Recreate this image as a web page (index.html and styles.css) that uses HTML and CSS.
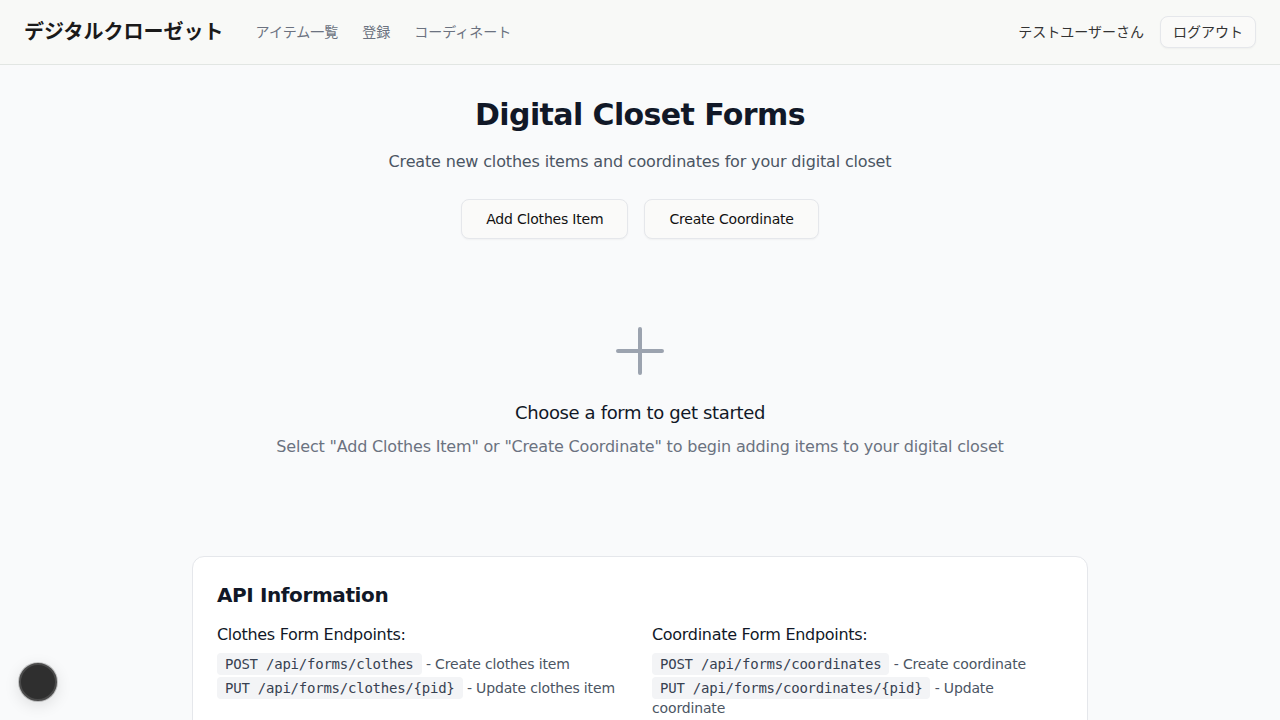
FILE: index.html
```html
<!DOCTYPE html>
<html lang="ja">
<head>
<meta charset="utf-8">
<title>Digital Closet Forms</title>
<link rel="stylesheet" href="styles.css">
</head>
<body>
<header class="topbar">
  <div class="topbar-left">
    <a class="logo" href="#">デジタルクローゼット</a>
    <nav class="nav">
      <a href="#">アイテム一覧</a>
      <a href="#">登録</a>
      <a href="#">コーディネート</a>
    </nav>
  </div>
  <div class="topbar-right">
    <span class="user">テストユーザーさん</span>
    <button class="btn-small">ログアウト</button>
  </div>
</header>

<main class="main">
  <h1 class="title">Digital Closet Forms</h1>
  <p class="subtitle">Create new clothes items and coordinates for your digital closet</p>
  <div class="actions">
    <button class="btn">Add Clothes Item</button>
    <button class="btn">Create Coordinate</button>
  </div>

  <section class="empty">
    <svg class="plus" width="48" height="48" viewBox="0 0 48 48" fill="none" stroke="#9ca3af" stroke-width="4" stroke-linecap="round">
      <path d="M24 2v44M2 24h44"/>
    </svg>
    <h3 class="empty-title">Choose a form to get started</h3>
    <p class="empty-text">Select "Add Clothes Item" or "Create Coordinate" to begin adding items to your digital closet</p>
  </section>

  <section class="card">
    <h2 class="card-title">API Information</h2>
    <div class="grid">
      <div>
        <h4 class="col-title">Clothes Form Endpoints:</h4>
        <div class="ep"><code>POST /api/forms/clothes</code> - Create clothes item</div>
        <div class="ep"><code>PUT /api/forms/clothes/{pid}</code> - Update clothes item</div>
      </div>
      <div>
        <h4 class="col-title">Coordinate Form Endpoints:</h4>
        <div class="ep"><code>POST /api/forms/coordinates</code> - Create coordinate</div>
        <div class="ep"><code>PUT /api/forms/coordinates/{pid}</code> - Update coordinate</div>
      </div>
    </div>
  </section>
</main>

<button class="dev-dot" aria-label="dev tools"></button>
</body>
</html>
```

FILE: styles.css
```css
* { box-sizing: border-box; }
html, body { margin: 0; padding: 0; }
body {
  background: #f9fafb;
  font-family: "DejaVu Sans", "Noto Sans CJK JP", sans-serif;
  color: #111827;
}
a { text-decoration: none; color: inherit; }
button { font-family: inherit; cursor: pointer; }

.topbar {
  height: 65px;
  background: #f8f9f7;
  border-bottom: 1px solid #e2e6e3;
  display: flex;
  align-items: center;
  justify-content: space-between;
  padding: 0 24px;
}
.topbar-left { display: flex; align-items: center; gap: 32px; }
.logo { font-size: 20px; font-weight: 600; color: #1a1a1a; line-height: 28px; }
.nav { display: flex; gap: 24px; }
.nav a { font-size: 14px; color: #6b7280; line-height: 20px; }
.topbar-right { display: flex; align-items: center; gap: 16px; }
.user { font-size: 14px; color: #333; line-height: 20px; }
.btn-small {
  font-size: 14px;
  color: #333;
  background: #fafaf9;
  border: 1px solid #e5e7eb;
  border-radius: 8px;
  padding: 5px 12px;
  line-height: 20px;
  box-shadow: 0 1px 2px rgba(0,0,0,0.04);
}

.main {
  max-width: 896px;
  margin: 0 auto;
  padding-top: 32px;
  text-align: center;
}
.title {
  margin: 0 0 17px;
  font-size: 30px;
  line-height: 36px;
  font-weight: 700;
  letter-spacing: -0.6px;
  color: #111827;
}
.subtitle {
  margin: 0 0 25px;
  font-size: 16px;
  line-height: 24px;
  letter-spacing: -0.16px;
  color: #4b5563;
}
.actions { display: flex; justify-content: center; gap: 16px; }
.btn {
  height: 40px;
  padding: 0 24px;
  font-size: 14px;
  letter-spacing: -0.2px;
  color: #111;
  background: #fafaf9;
  border: 1px solid #e5e7eb;
  border-radius: 8px;
  box-shadow: 0 1px 2px rgba(0,0,0,0.04);
}

.empty { padding-top: 88px; }
.plus { display: block; margin: 0 auto; }
.empty-title {
  margin: 24px 0 8px;
  font-size: 18px;
  line-height: 28px;
  font-weight: 500;
  letter-spacing: -0.36px;
  color: #111827;
}
.empty-text {
  margin: 0;
  font-size: 16px;
  line-height: 24px;
  letter-spacing: -0.18px;
  color: #6b7280;
}

.card {
  margin-top: 97px;
  text-align: left;
  background: #fff;
  border: 1px solid #e5e7eb;
  border-radius: 12px;
  padding: 24px;
}
.card-title {
  margin: 0 0 14px;
  font-size: 20px;
  line-height: 28px;
  font-weight: 700;
  letter-spacing: -0.4px;
  color: #111827;
}
.grid { display: grid; grid-template-columns: 1fr 1fr; gap: 24px; }
.col-title {
  margin: 0 0 5px;
  font-size: 16px;
  line-height: 24px;
  font-weight: 500;
  letter-spacing: -0.3px;
  color: #111827;
}
.ep {
  font-size: 14px;
  line-height: 20px;
  letter-spacing: -0.15px;
  color: #4b5563;
  margin-bottom: 2px;
  padding-top: 2px;
}
.ep code {
  font-family: "DejaVu Sans Mono", monospace;
  font-size: 14px;
  letter-spacing: -0.23px;
  color: #374151;
  background: #f3f4f6;
  border-radius: 4px;
  padding: 3px 8px;
}

.dev-dot {
  position: fixed;
  left: 19px;
  bottom: 19px;
  width: 38px;
  height: 38px;
  border-radius: 50%;
  background: #2f2f2f;
  border: 2px solid #4a4a4a;
  box-shadow: 0 4px 16px rgba(0,0,0,0.12), 0 0 0 1px rgba(0,0,0,0.2);
  padding: 0;
}
```
